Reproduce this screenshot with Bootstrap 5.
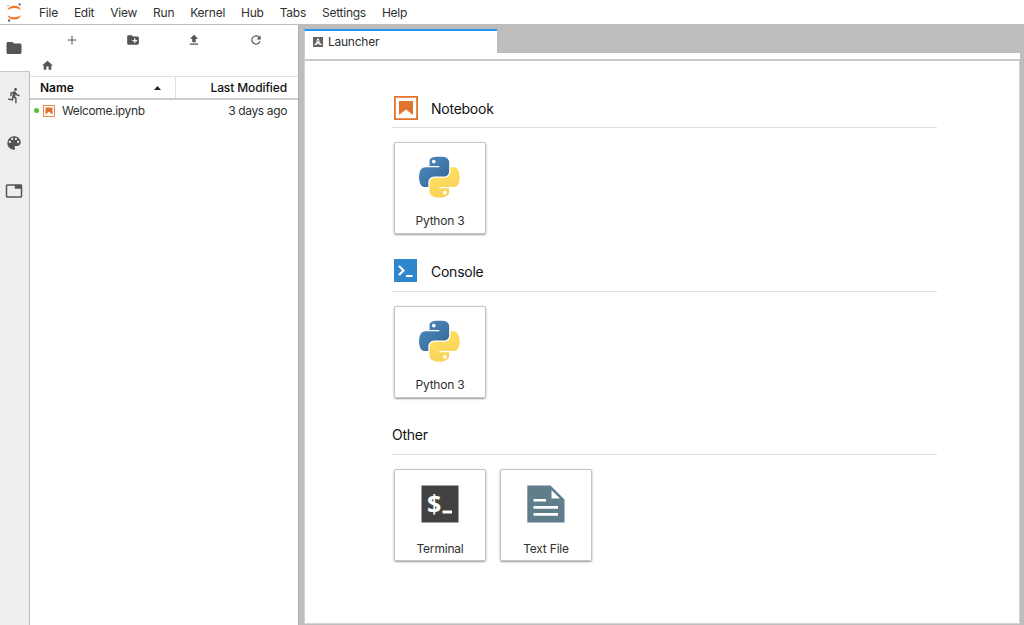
<!DOCTYPE html>
<html lang="en">
<head>
<meta charset="utf-8">
<title>JupyterLab</title>
<link rel="stylesheet" href="https://cdn.jsdelivr.net/npm/bootstrap@5.3.0/dist/css/bootstrap.min.css">
<style>
body{font:12px/16px Inter,"Liberation Sans",sans-serif;color:#303030;height:625px}
svg{display:block;flex:none}
.topbar{height:25px;border-bottom:1px solid #bdbdbd;padding-left:6px}
.topbar .nav-link{padding:0 8px;color:#303030;line-height:25px;letter-spacing:-.25px;white-space:nowrap}
.topbar .menus{margin-left:8px}
.rail{width:30px;background:#eee;border-right:1px solid #bdbdbd;fill:#616161}
.rail button{height:47.5px;width:28px;border:0;background:none;padding:0;fill:#555}
.rail .current{width:30px;background:#fff;border-bottom:1px solid #c8c8c8;height:47px;padding-left:5px}
.browser{width:268px;fill:#555}
.tools{height:29px;padding-left:11px}
.tools div{width:61.4px}
.crumbs{height:22px;padding-left:11px}
.heads{height:24px;border-top:1px solid #e0e0e0;border-bottom:2px solid #ccc;color:#111;font-weight:500;line-height:22px}
.heads .first{width:146px;padding:0 14px 0 10px;border-right:1px solid #e0e0e0}
.heads .when{padding-right:11px;letter-spacing:-.12px}
.filerow{height:21px;padding:0 11px 0 4px;letter-spacing:-.36px}
.filerow .filename{margin-left:7px}
.dot{width:5px;height:5px;background:#4fc52f}
.dock{background:#bdbdbd;padding:4px 4px 1px 5px;border-left:1px solid #b0b0b0}
.tabitem{width:193px;height:25px;background:#fff;border-top:2px solid #2196f3;border-left:1px solid #ccc;padding:0 0 1px 8px;gap:5px;letter-spacing:-.25px}
.strip{height:8px;background:#fff;border-bottom:2px solid #c9c9c9;border-left:1px solid #ccc;margin-top:-1px}
.pane{background:#fff;border:1px solid #d4d4d4;border-top:0;padding:32px 82px 0 87px}
.group{height:163.7px}
.title{height:35px;border-bottom:1px solid #e0e0e0;font-size:14px;color:#111;padding-bottom:4px;letter-spacing:-.25px}
.title svg{margin:0 13px 0 2px}
.title .prompt{margin-bottom:2px}
.title span{padding-top:1px}
.tile{width:92px;height:92px;border:1px solid #c4c4c4;border-radius:2px;box-shadow:0 1px 2px #0006;padding-top:13px;letter-spacing:-.2px}
.tile .pic{height:42px}
.tile .pic svg{margin-right:1px}
.tile .cap{margin-top:15px}
.group:last-child .cap{margin-top:16px}
.tiles{padding:14px 0 0 2px;gap:14px}
</style>
</head>
<body class="d-flex flex-column overflow-hidden bg-white">
<svg width="0" height="0" class="position-absolute">
<defs>
<linearGradient id="blue" x1="0" y1="0" x2=".8" y2=".9"><stop stop-color="#4f8dc1"/><stop offset="1" stop-color="#356a99"/></linearGradient>
<linearGradient id="gold" x1=".3" y1="0" x2=".7" y2="1"><stop stop-color="#ffe263"/><stop offset="1" stop-color="#f7cf58"/></linearGradient>
<symbol id="python" viewBox="0 0 112 111">
<path fill="url(#blue)" d="M54.919 0C50.335.022 45.958.413 42.106 1.095 30.76 3.099 28.7 7.295 28.7 15.032v10.219h26.813v3.406H18.638c-7.793 0-14.616 4.684-16.75 13.594-2.462 10.213-2.571 16.586 0 27.25 1.906 7.938 6.457 13.594 14.25 13.594h9.218v-12.25c0-8.85 7.657-16.657 16.75-16.657h26.782c7.455 0 13.406-6.138 13.406-13.625V15.032c0-7.266-6.13-12.725-13.406-13.937C64.282.328 59.502-.02 54.919 0zm-14.5 8.22c2.769 0 5.031 2.298 5.031 5.124 0 2.817-2.262 5.094-5.031 5.094-2.78 0-5.031-2.277-5.031-5.094 0-2.826 2.251-5.125 5.031-5.125z"/>
<path fill="url(#gold)" d="M85.638 28.657v11.907c0 9.23-7.826 17-16.75 17H42.106c-7.336 0-13.406 6.278-13.406 13.625v25.53c0 7.267 6.319 11.541 13.406 13.625 8.487 2.496 16.626 2.947 26.782 0 6.75-1.954 13.406-5.887 13.406-13.625V86.501H55.513v-3.406H95.7c7.793 0 10.696-5.436 13.406-13.594 2.8-8.399 2.68-16.476 0-27.25-1.925-7.757-5.604-13.594-13.406-13.594zM70.575 93.313c2.78 0 5.031 2.278 5.031 5.094 0 2.827-2.251 5.125-5.031 5.125-2.77 0-5.031-2.298-5.031-5.125 0-2.816 2.262-5.094 5.031-5.094z"/>
</symbol>
<symbol id="book" viewBox="0 0 24 24"><path fill="none" stroke="#e2732d" stroke-width="1.8" d="M.9.9h22.2v22.2H.9z"/><path fill="#e2732d" d="M5 5h14v14l-7-5.5L5 19z"/></symbol>
</defs>
</svg>

<header class="topbar d-flex align-items-center">
<svg width="17" height="19" viewBox="0 0 17 19"><path fill="#f37726" d="M1.5 7Q3.2 2.8 8.3 2.8T15 7Q12 5 8.3 5T1.5 7zM1.5 12.2Q4.5 14.3 8.3 14.3T15 12.2Q13.2 16.5 8.3 16.5T1.5 12.2z"/><circle cx="13.7" cy="1.4" r="1.1" fill="#616161"/><circle cx="2.1" cy="2.6" r=".7" fill="#777"/><circle cx="3.1" cy="17.4" r="1.2" fill="#616161"/></svg>
<nav class="menus nav flex-nowrap"><a class="nav-link">File</a><a class="nav-link">Edit</a><a class="nav-link">View</a><a class="nav-link">Run</a><a class="nav-link">Kernel</a><a class="nav-link">Hub</a><a class="nav-link">Tabs</a><a class="nav-link">Settings</a><a class="nav-link">Help</a></nav>
</header>

<div class="d-flex flex-grow-1">
<aside class="rail d-flex flex-column">
<button class="current d-flex align-items-center"><svg width="18" height="18" viewBox="0 0 24 24"><path d="M10 4H4c-1.1 0-2 .9-2 2v12c0 1.1.9 2 2 2h16c1.1 0 2-.9 2-2V8c0-1.1-.9-2-2-2h-8z"/></svg></button>
<button class="d-flex align-items-center justify-content-center"><svg width="17" height="17" viewBox="0 0 24 24"><path d="M13.49 5.48c1.1 0 2-.9 2-2s-.9-2-2-2-2 .9-2 2 .9 2 2 2zm-3.6 13.9l1-4.4 2.1 2v6h2v-7.5l-2.1-2 .6-3c1.3 1.5 3.3 2.5 5.5 2.5v-2c-1.9 0-3.5-1-4.3-2.4l-1-1.6c-.4-.6-1-1-1.7-1-.3 0-.5.1-.8.1l-5.2 2.2v4.7h2v-3.4l1.8-.7-1.6 8.1-4.9-1-.4 2 7 1.4z"/></svg></button>
<button class="d-flex align-items-center justify-content-center"><svg width="18" height="18" viewBox="0 0 24 24"><path d="M12 3a9 9 0 0 0 0 18c.83 0 1.5-.67 1.5-1.5 0-.39-.15-.74-.39-1.01-.23-.26-.38-.61-.38-.99 0-.83.67-1.5 1.5-1.5H16c2.76 0 5-2.24 5-5 0-4.42-4.03-8-9-8zm-5.5 9a1.5 1.5 0 1 1 0-3 1.5 1.5 0 0 1 0 3zm3-4a1.5 1.5 0 1 1 0-3 1.5 1.5 0 0 1 0 3zm5 0a1.5 1.5 0 1 1 0-3 1.5 1.5 0 0 1 0 3zm3 4a1.5 1.5 0 1 1 0-3 1.5 1.5 0 0 1 0 3z"/></svg></button>
<button class="d-flex align-items-center justify-content-center"><svg width="18" height="18" viewBox="0 0 24 24"><path d="M21 3H3c-1.1 0-2 .9-2 2v14c0 1.1.9 2 2 2h18c1.1 0 2-.9 2-2V5c0-1.1-.9-2-2-2zm0 16H3V5h10v4h8z"/></svg></button>
</aside>

<section class="browser">
<div class="tools d-flex align-items-center">
<div class="d-flex justify-content-center"><svg width="14" height="14" viewBox="0 0 24 24"><path d="M19.5 12.9h-6.6v6.6h-1.8v-6.6H4.5v-1.8h6.6V4.5h1.8v6.6h6.6z"/></svg></div>
<div class="d-flex justify-content-center"><svg width="14" height="14" viewBox="0 0 24 24"><path d="M20 6h-8l-2-2H4c-1.11 0-2 .89-2 2v12c0 1.11.89 2 2 2h16c1.11 0 2-.89 2-2V8c0-1.11-.89-2-2-2zm-1 8h-3v3h-2v-3h-3v-2h3V9h2v3h3z"/></svg></div>
<div class="d-flex justify-content-center"><svg width="14" height="14" viewBox="0 0 24 24"><path d="M9 16h6v-6h4l-7-7-7 7h4zm-4 2h14v2H5z"/></svg></div>
<div class="d-flex justify-content-center"><svg width="14" height="14" viewBox="0 0 24 24"><path d="M17.65 6.35A8 8 0 0 0 4 12c0 4.42 3.58 8 8 8 3.73 0 6.84-2.55 7.73-6h-2.08A6 6 0 1 1 12 6c1.66 0 3.14.69 4.22 1.78L13 11h7V4z"/></svg></div>
</div>
<div class="crumbs d-flex align-items-center"><svg width="13" height="13" viewBox="0 0 24 24"><path d="M10 20v-6h4v6h5v-8h3L12 3 2 12h3v8z"/></svg></div>
<div class="heads d-flex"><div class="first d-flex justify-content-between align-items-center"><span class="fw-semibold">Name</span><svg width="7" height="4" fill="#222"><path d="M0 4l3.5-4L7 4z"/></svg></div><div class="when flex-grow-1 text-end">Last Modified</div></div>
<div class="filerow d-flex align-items-center"><span class="dot rounded-circle"></span><svg class="ms-1" width="12" height="12"><use href="#book"/></svg><span class="filename flex-grow-1">Welcome.ipynb</span><span>3 days ago</span></div>
</section>

<main class="dock flex-grow-1 d-flex flex-column">
<div class="tabitem d-flex align-items-center"><svg width="10" height="10" viewBox="0 0 10 10"><path fill="#616161" d="M0 0h10v10H0z"/><path fill="#fff" d="M5 1L3.6 3v2.2L1.5 7.2v1.2l2-1h3l2 1V7.2L6.4 5.2V3z"/><path fill="#616161" d="M4.5 3h1v1.5h-1zM4.6 6h.8v2h-.8z"/></svg><span>Launcher</span></div>
<div class="strip"></div>
<div class="pane flex-grow-1">
<div class="group">
<div class="title d-flex align-items-center"><svg width="24" height="24"><use href="#book"/></svg><span>Notebook</span></div>
<div class="tiles d-flex"><div class="tile text-center"><div class="pic d-flex justify-content-center"><svg width="41" height="42"><use href="#python"/></svg></div><div class="cap">Python 3</div></div></div>
</div>
<div class="group">
<div class="title d-flex align-items-center"><svg class="prompt" width="24" height="23" viewBox="0 0 24 23"><path fill="#2f86cb" d="M0 0h23v23H0z"/><path fill="none" stroke="#fff" stroke-width="2.2" d="M5 7l4.5 4.5L5 16M12 17h6.5"/></svg>Console</div>
<div class="tiles d-flex"><div class="tile text-center"><div class="pic d-flex justify-content-center"><svg width="41" height="42"><use href="#python"/></svg></div><div class="cap">Python 3</div></div></div>
</div>
<div class="group">
<div class="title d-flex align-items-center">Other</div>
<div class="tiles d-flex">
<div class="tile text-center"><div class="pic d-flex justify-content-center align-items-center"><svg width="38" height="38" viewBox="0 0 38 38"><path fill="#424242" d="M.5.5h37v37H.5z"/><text x="6" y="27.5" font-family="Open Sans" font-weight="700" font-size="25" fill="#fff">$</text><path fill="#fff" d="M21.5 25.5H31v3h-9.5z"/></svg></div><div class="cap">Terminal</div></div>
<div class="tile text-center"><div class="pic d-flex justify-content-center align-items-center"><svg width="38" height="38" viewBox="0 0 38 38"><path fill="#607d8b" d="M.3.5H23.5l14 14v23H.3z"/><path fill="#fff" d="M24.500 5v8.500H33zM6.500 14h12.500v2.500h-12.500zM6.500 21h24.500v2.800h-24.500zM6.500 28h24.500v2.800h-24.500z"/></svg></div><div class="cap">Text File</div></div>
</div>
</div>
</div>
</main>
</div>
<script src="https://cdn.jsdelivr.net/npm/bootstrap@5.3.0/dist/js/bootstrap.bundle.min.js"></script>
</body>
</html>
